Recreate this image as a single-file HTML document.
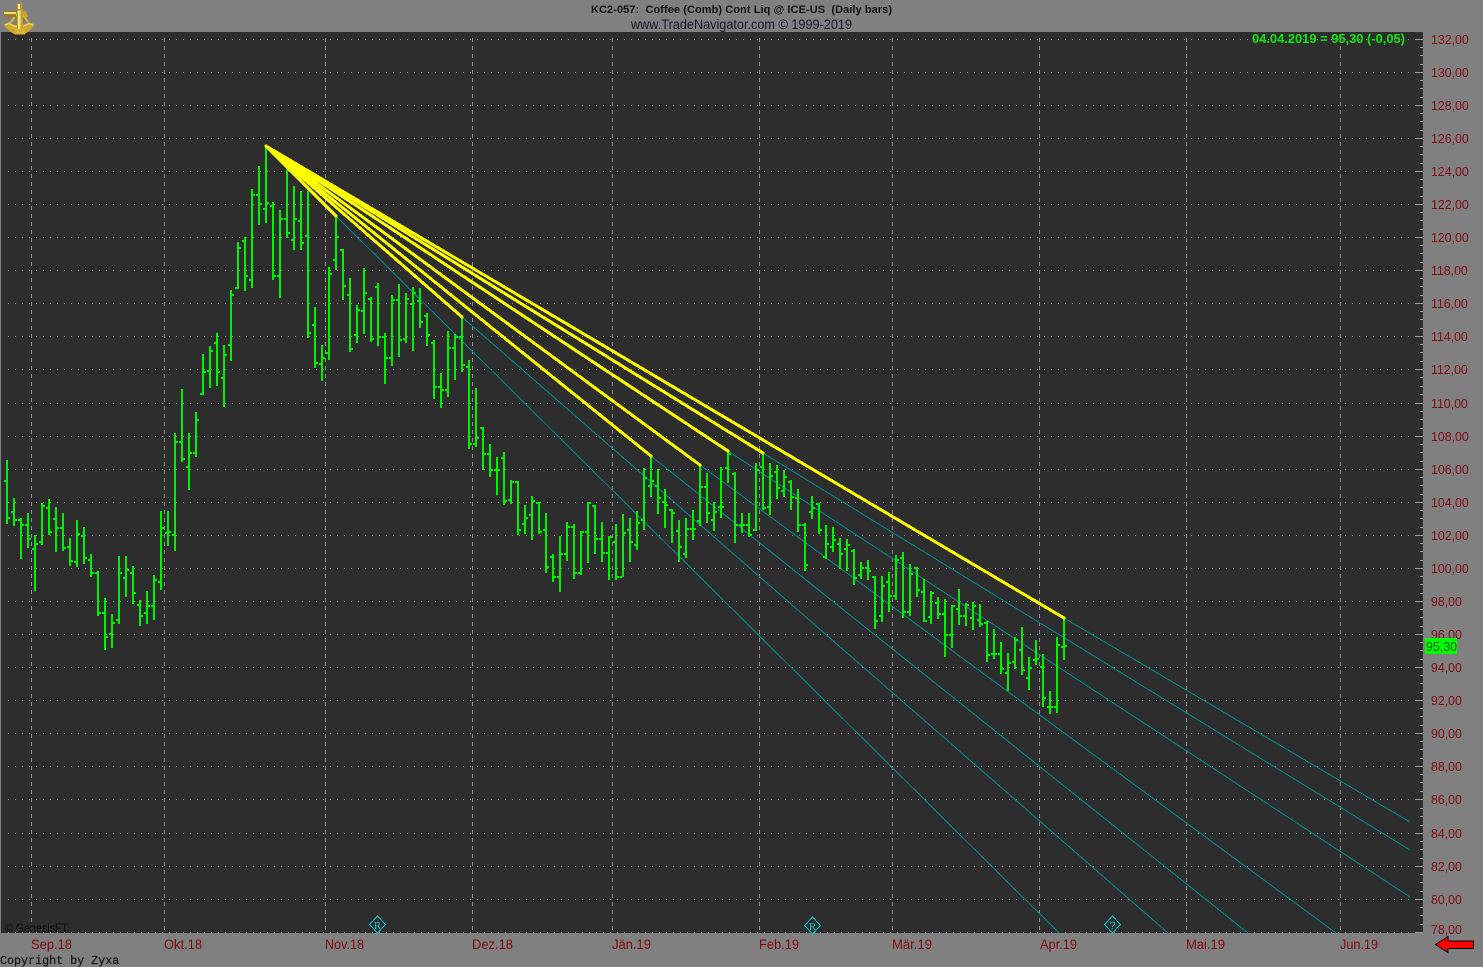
<!DOCTYPE html>
<html>
<head>
<meta charset="utf-8">
<title>KC2-057 Coffee</title>
<style>
html,body{margin:0;padding:0;background:#808080;width:1483px;height:967px;overflow:hidden}
svg{display:block}
text{font-family:"Liberation Sans",Arial,sans-serif;white-space:pre}
.y{font-size:13px;fill:#800a14}
.x{font-size:13.5px;fill:#800a14}
</style>
</head>
<body>
<svg width="1483" height="967" viewBox="0 0 1483 967" xmlns="http://www.w3.org/2000/svg">
<rect width="1483" height="967" fill="#808080"/>
<rect x="1" y="32" width="1422" height="901" fill="#2d2d2d"/>

<!-- horizontal dotted grid -->
<path shape-rendering="crispEdges" fill="none" stroke="#8f8f8f" stroke-width="1" stroke-dasharray="1 6" d="M8 39.5H1409M8 72.5H1409M8 105.5H1409M8 138.5H1409M8 171.5H1409M8 204.5H1409M8 237.5H1409M8 270.5H1409M8 303.5H1409M8 336.5H1409M8 369.5H1409M8 403.5H1409M8 436.5H1409M8 469.5H1409M8 502.5H1409M8 535.5H1409M8 568.5H1409M8 601.5H1409M8 634.5H1409M8 667.5H1409M8 700.5H1409M8 733.5H1409M8 766.5H1409M8 799.5H1409M8 833.5H1409M8 866.5H1409M8 899.5H1409M8 932.5H1409"/>
<!-- vertical dashed grid -->
<path shape-rendering="crispEdges" fill="none" stroke="#8f8f8f" stroke-width="1" stroke-dasharray="4 4" d="M31.5 38V933M164.5 38V933M325.5 38V933M472.5 38V933M612.5 38V933M759.5 38V933M892.5 38V933M1039.5 38V933M1186.5 38V933M1340.5 38V933"/>
<!-- axis ticks -->
<path shape-rendering="crispEdges" fill="none" stroke="#9a9a9a" stroke-width="1" d="M1415 39.5H1423M1415 72.5H1423M1415 105.5H1423M1415 138.5H1423M1415 171.5H1423M1415 204.5H1423M1415 237.5H1423M1415 270.5H1423M1415 303.5H1423M1415 336.5H1423M1415 369.5H1423M1415 403.5H1423M1415 436.5H1423M1415 469.5H1423M1415 502.5H1423M1415 535.5H1423M1415 568.5H1423M1415 601.5H1423M1415 634.5H1423M1415 667.5H1423M1415 700.5H1423M1415 733.5H1423M1415 766.5H1423M1415 799.5H1423M1415 833.5H1423M1415 866.5H1423M1415 899.5H1423M1415 932.5H1423"/>
<path shape-rendering="crispEdges" fill="none" stroke="#9a9a9a" stroke-width="1" d="M1420 47.5h3M1420 55.5h3M1420 64.5h3M1420 80.5h3M1420 88.5h3M1420 97.5h3M1420 113.5h3M1420 121.5h3M1420 130.5h3M1420 146.5h3M1420 154.5h3M1420 163.5h3M1420 179.5h3M1420 187.5h3M1420 196.5h3M1420 212.5h3M1420 220.5h3M1420 229.5h3M1420 245.5h3M1420 253.5h3M1420 262.5h3M1420 278.5h3M1420 286.5h3M1420 295.5h3M1420 311.5h3M1420 319.5h3M1420 328.5h3M1420 344.5h3M1420 352.5h3M1420 361.5h3M1420 377.5h3M1420 386.5h3M1420 394.5h3M1420 411.5h3M1420 419.5h3M1420 428.5h3M1420 444.5h3M1420 452.5h3M1420 461.5h3M1420 477.5h3M1420 485.5h3M1420 494.5h3M1420 510.5h3M1420 518.5h3M1420 527.5h3M1420 543.5h3M1420 551.5h3M1420 560.5h3M1420 576.5h3M1420 584.5h3M1420 593.5h3M1420 609.5h3M1420 617.5h3M1420 626.5h3M1420 642.5h3M1420 650.5h3M1420 659.5h3M1420 675.5h3M1420 683.5h3M1420 692.5h3M1420 708.5h3M1420 716.5h3M1420 725.5h3M1420 741.5h3M1420 749.5h3M1420 758.5h3M1420 774.5h3M1420 782.5h3M1420 791.5h3M1420 808.5h3M1420 816.5h3M1420 825.5h3M1420 841.5h3M1420 849.5h3M1420 858.5h3M1420 874.5h3M1420 882.5h3M1420 891.5h3M1420 907.5h3M1420 915.5h3M1420 924.5h3"/>

<!-- teal rays -->
<path shape-rendering="crispEdges" fill="none" stroke="#008c90" stroke-width="1" d="M1064 618L1410 822M763 453L1410 850M728 451L1410 897M700 465L1336 933M651 456L1248 933M462 317L1168 933M336 216L1059 933"/>

<!-- price bars -->
<path shape-rendering="crispEdges" fill="none" stroke="#00f200" stroke-width="2" d="
M7 460V524M4 481h2M8 518h2
M14 498V526M11 512h2M15 520h2
M21 518V559M18 520h2M22 525h2
M28 513V548M25 525h2M29 539h2
M35 535V591M32 549h2M36 544h2
M42 503V545M39 542h2M43 506h2
M49 499V535M46 508h2M50 532h2
M56 507V552M53 519h2M57 528h2
M63 513V551M60 528h2M64 548h2
M70 538V566M67 547h2M71 561h2
M77 520V567M74 562h2M78 534h2
M84 527V564M81 536h2M85 558h2
M91 554V577M88 560h2M92 573h2
M98 571V616M95 573h2M99 613h2
M105 598V650M102 613h2M106 637h2
M112 614V648M109 634h2M113 623h2
M119 556V624M116 620h2M120 573h2
M126 556V597M123 578h2M127 570h2
M133 566V604M130 573h2M134 593h2
M140 600V626M137 605h2M141 616h2
M147 591V624M144 613h2M148 606h2
M154 575V620M151 606h2M155 580h2
M161 511V590M158 582h2M162 528h2
M168 511V546M165 533h2M169 532h2
M175 433V551M172 535h2M176 442h2
M182 389V462M179 442h2M183 459h2
M189 433V490M186 467h2M190 453h2
M196 412V457M193 453h2M197 420h2
M203 354V395M200 394h2M204 372h2
M210 346V388M207 371h2M211 351h2
M217 333V386M214 343h2M218 372h2
M224 345V407M221 378h2M225 355h2
M231 290V361M228 345h2M232 295h2
M238 242V289M235 288h2M239 248h2
M245 237V291M242 241h2M246 276h2
M252 189V288M249 280h2M253 195h2
M259 166V225M256 195h2M260 204h2
M266 147V223M263 209h2M267 203h2
M273 202V280M270 206h2M274 276h2
M280 210V298M277 276h2M281 219h2
M287 168V238M284 219h2M288 233h2
M294 186V250M291 240h2M295 219h2
M301 191V250M298 221h2M302 243h2
M308 191V338M305 236h2M309 333h2
M315 307V368M312 325h2M316 363h2
M322 345V381M319 364h2M323 358h2
M329 267V360M326 353h2M330 274h2
M336 216V270M333 260h2M337 237h2
M343 249V300M340 250h2M344 286h2
M350 278V352M347 295h2M351 349h2
M357 305V343M354 335h2M358 310h2
M364 268V334M361 311h2M365 293h2
M371 297V342M368 299h2M372 339h2
M378 283V346M375 287h2M379 337h2
M385 333V384M382 337h2M386 358h2
M392 295V366M389 358h2M393 300h2
M399 284V357M396 300h2M400 340h2
M406 293V343M403 339h2M407 299h2
M413 287V351M410 304h2M414 293h2
M420 288V328M417 301h2M421 322h2
M427 313V346M424 316h2M428 335h2
M434 340V399M431 343h2M435 387h2
M441 373V408M438 387h2M442 390h2
M448 331V397M445 390h2M449 348h2
M455 334V380M452 348h2M456 337h2
M462 318V372M459 337h2M463 365h2
M469 360V449M466 367h2M470 444h2
M476 388V447M473 444h2M477 438h2
M483 427V470M480 428h2M484 454h2
M490 444V477M487 454h2M491 470h2
M497 457V495M494 470h2M498 470h2
M504 452V505M501 458h2M505 501h2
M511 480V504M508 500h2M512 482h2
M518 481V535M515 482h2M519 530h2
M525 505V534M522 524h2M526 518h2
M532 496V540M529 515h2M533 501h2
M539 502V534M536 503h2M540 532h2
M546 513V573M543 530h2M547 567h2
M553 554V582M550 557h2M554 577h2
M560 536V592M557 577h2M561 554h2
M567 522V561M564 554h2M568 527h2
M574 524V579M571 527h2M575 573h2
M581 531V575M578 573h2M582 532h2
M588 502V563M585 532h2M589 503h2
M595 505V554M592 506h2M596 539h2
M602 522V562M599 539h2M603 553h2
M609 536V580M606 553h2M610 537h2
M616 524V580M613 542h2M617 577h2
M623 514V577M620 577h2M624 533h2
M630 518V562M627 530h2M631 542h2
M637 511V550M634 545h2M638 523h2
M644 468V530M641 520h2M645 478h2
M651 456V497M648 486h2M652 481h2
M658 469V514M655 486h2M659 498h2
M665 489V528M662 502h2M666 505h2
M672 509V543M669 510h2M673 513h2
M679 520V562M676 531h2M680 547h2
M686 518V558M683 554h2M687 529h2
M693 510V540M690 529h2M694 529h2
M700 466V526M697 521h2M701 487h2
M707 473V523M704 487h2M708 513h2
M714 502V531M711 520h2M715 512h2
M721 467V518M718 507h2M722 507h2
M728 450V483M725 468h2M729 454h2
M735 472V543M732 474h2M736 525h2
M742 513V533M739 525h2M743 525h2
M749 513V537M746 525h2M750 535h2
M756 463V531M753 530h2M757 470h2
M763 452V510M760 467h2M764 508h2
M770 463V515M767 507h2M771 476h2
M777 465V499M774 472h2M778 488h2
M784 470V497M781 491h2M785 477h2
M791 480V510M788 482h2M792 497h2
M798 489V532M795 498h2M799 525h2
M805 523V571M802 525h2M806 565h2
M812 496V519M809 512h2M813 508h2
M819 503V534M816 504h2M820 530h2
M826 525V559M823 557h2M827 544h2
M833 527V552M830 547h2M834 540h2
M840 538V569M837 544h2M841 554h2
M847 539V571M844 549h2M848 545h2
M854 549V585M851 551h2M855 578h2
M861 562V579M858 575h2M862 568h2
M868 560V580M865 568h2M869 571h2
M875 576V629M872 577h2M876 621h2
M882 576V622M879 616h2M883 586h2
M889 572V612M886 582h2M890 596h2
M896 555V600M893 596h2M897 560h2
M903 552V618M900 558h2M904 612h2
M910 564V616M907 612h2M911 574h2
M917 567V597M914 568h2M918 590h2
M924 579V622M921 592h2M925 621h2
M931 591V624M928 617h2M932 593h2
M938 597V619M935 603h2M939 614h2
M945 599V657M942 614h2M946 635h2
M952 605V648M949 635h2M953 606h2
M959 589V625M956 609h2M960 616h2
M966 603V626M963 616h2M967 605h2
M973 602V630M970 618h2M974 606h2
M980 604V627M977 620h2M981 624h2
M987 621V662M984 623h2M988 655h2
M994 629V659M991 654h2M995 654h2
M1001 642V674M998 654h2M1002 669h2
M1008 653V691M1005 673h2M1009 663h2
M1015 637V669M1012 662h2M1016 640h2
M1022 627V675M1019 650h2M1023 670h2
M1029 657V690M1026 678h2M1030 668h2
M1036 640V665M1033 660h2M1037 659h2
M1043 654V707M1040 667h2M1044 698h2
M1050 691V714M1047 707h2M1051 707h2
M1057 637V713M1054 707h2M1058 645h2
M1064 618V660M1061 647h2M1065 646h2
"/>

<!-- yellow lines -->
<path shape-rendering="crispEdges" fill="none" stroke="#ffff00" stroke-width="3" stroke-linecap="round" d="M266 146L336 216M266 146L462 317M266 146L651 456M266 146L700 465M266 146L728 451M266 146L763 453M266 146L1064 618"/>

<!-- y labels -->
<g class="y" transform="translate(1431 0) scale(.95 1)">
<text x="0" y="44">132,00</text><text x="0" y="77">130,00</text><text x="0" y="110">128,00</text><text x="0" y="143">126,00</text><text x="0" y="176">124,00</text><text x="0" y="209">122,00</text><text x="0" y="242">120,00</text><text x="0" y="275">118,00</text><text x="0" y="308">116,00</text><text x="0" y="341">114,00</text><text x="0" y="374">112,00</text><text x="0" y="408">110,00</text><text x="0" y="441">108,00</text><text x="0" y="474">106,00</text><text x="0" y="507">104,00</text><text x="0" y="540">102,00</text><text x="0" y="573">100,00</text><text x="0" y="606">98,00</text><text x="0" y="639">96,00</text><text x="0" y="672">94,00</text><text x="0" y="705">92,00</text><text x="0" y="738">90,00</text><text x="0" y="771">88,00</text><text x="0" y="804">86,00</text><text x="0" y="838">84,00</text><text x="0" y="871">82,00</text><text x="0" y="904">80,00</text><text x="0" y="934">78,00</text>
</g>

<!-- price box -->
<rect x="1425" y="638" width="32" height="16" fill="#00ff00"/>
<text x="1426" y="651" font-size="13" fill="#0a5a0a" textLength="31" lengthAdjust="spacingAndGlyphs">95,30</text>

<!-- x labels -->
<g class="x">
<text x="31" y="949" textLength="41" lengthAdjust="spacingAndGlyphs">Sep.18</text><text x="164" y="949" textLength="38" lengthAdjust="spacingAndGlyphs">Okt.18</text><text x="325" y="949" textLength="39" lengthAdjust="spacingAndGlyphs">Nov.18</text><text x="472" y="949" textLength="41" lengthAdjust="spacingAndGlyphs">Dez.18</text><text x="612" y="949" textLength="39" lengthAdjust="spacingAndGlyphs">Jän.19</text><text x="759" y="949" textLength="40" lengthAdjust="spacingAndGlyphs">Feb.19</text><text x="892" y="949" textLength="40" lengthAdjust="spacingAndGlyphs">Mär.19</text><text x="1040" y="949" textLength="37" lengthAdjust="spacingAndGlyphs">Apr.19</text><text x="1186" y="949" textLength="39" lengthAdjust="spacingAndGlyphs">Mai.19</text><text x="1340" y="949" textLength="38" lengthAdjust="spacingAndGlyphs">Jun.19</text>
</g>

<!-- title -->
<text x="591" y="13" font-size="11" font-weight="bold" fill="#111" textLength="301" lengthAdjust="spacing" xml:space="preserve">KC2-057:  Coffee (Comb) Cont Liq @ ICE-US  (Daily bars)</text>
<text x="631" y="29" font-size="14" fill="#14142a" textLength="221" lengthAdjust="spacingAndGlyphs">www.TradeNavigator.com © 1999-2019</text>
<text x="1252" y="43" font-size="13" font-weight="bold" fill="#0de80d" textLength="153" lengthAdjust="spacingAndGlyphs">04.04.2019 = 95,30 (-0,05)</text>

<text x="5" y="932" font-size="12" fill="#0c0c0c" textLength="63" lengthAdjust="spacingAndGlyphs">© GenesisFT</text>
<text x="0" y="964" font-size="11.7" style="font-family:'Liberation Mono',monospace" fill="#111" stroke="#111" stroke-width=".2">Copyright by Zyxa</text>

<!-- diamonds -->
<g fill="none" stroke="#00c8cc" stroke-width="1" shape-rendering="crispEdges">
<path d="M377.5 916L385.5 924.5L377.5 933L369.5 924.5Z"/>
<path d="M812.5 917L820.5 925.5L812.5 934L804.5 925.5Z"/>
<path d="M1112.5 916L1120.5 924.5L1112.5 933L1104.5 924.5Z"/>
</g>
<g font-size="11" text-anchor="middle" fill="#20c0c4">
<text x="377.5" y="929" style="font-family:'Liberation Serif',serif">R</text>
<text x="812.5" y="930" style="font-family:'Liberation Serif',serif">R</text>
<text x="1112.5" y="929" style="font-family:'Liberation Sans',sans-serif">?</text>
</g>

<!-- red arrow -->
<path d="M1435.5 944.5L1448 936.5V941H1473.5V948.5H1448V952.5Z" fill="#ff0000" stroke="#000" stroke-width="1"/>

<!-- sextant logo -->
<g>
<!-- arc band -->
<path d="M3.5 24.5L9 22Q19 29 29 22L35 24.5Q30 31 24 34.5H15Q8 31 3.5 24.5Z" fill="#cfa92c"/>
<path d="M5 25L9 23.5Q19 30 29 23.5L33 25" fill="none" stroke="#f4e27a" stroke-width="1"/>
<!-- frame arms -->
<path d="M17 14L10 23M22 13L28 22" fill="none" stroke="#d9b630" stroke-width="2"/>
<!-- telescope -->
<rect x="4" y="11" width="12" height="6" fill="#9c7d1e"/>
<rect x="4" y="12" width="12" height="2" fill="#f0dc70"/>
<!-- column -->
<rect x="17" y="9" width="6" height="25" fill="#c9a428"/>
<rect x="18" y="9" width="2.5" height="25" fill="#f4e27a"/>
<rect x="15" y="29" width="10" height="5.5" fill="#d9b630"/>
<!-- head -->
<rect x="17" y="3.5" width="5.5" height="7" fill="#b8962a"/>
<rect x="18" y="4" width="2" height="5" fill="#f8e98a"/>
<!-- mirror -->
<path d="M24 11L27 17" stroke="#c9a428" stroke-width="2.5" fill="none"/>
</g>
</svg>
</body>
</html>
